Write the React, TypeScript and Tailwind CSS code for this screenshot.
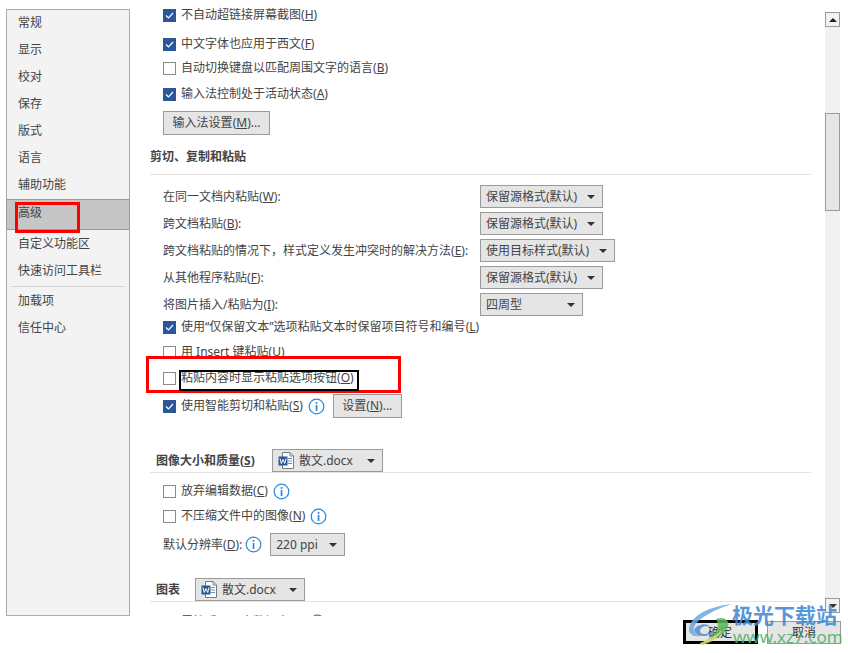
import React from "react";

const FONT = "font-['Noto_Sans','Noto_Sans_CJK_SC',sans-serif]";

// label with an underlined access key, e.g. "(H)"
const Label: React.FC<{ text: string; k?: string; after?: string }> = ({ text, k, after }) => (
  <span className="whitespace-nowrap">
    {text}
    {k && (
      <>
        (<span className="underline">{k}</span>)
      </>
    )}
    {after}
  </span>
);

const Check: React.FC<{ on?: boolean }> = ({ on }) =>
  on ? (
    <span className="w-[13px] h-[13px] bg-[#2b579a] border border-[#2b579a] flex items-center justify-center shrink-0">
      <svg width="11" height="11" viewBox="0 0 11 11">
        <path d="M2 5.5 L4.5 8 L9 3" fill="none" stroke="#fff" strokeWidth="1.2" />
      </svg>
    </span>
  ) : (
    <span className="w-[13px] h-[13px] bg-white border border-[#8a8a8a] shrink-0" />
  );

const Info: React.FC = () => (
  <svg width="17" height="17" viewBox="0 0 17 17" className="shrink-0">
    <circle cx="8.5" cy="8.5" r="7.3" fill="#fff" stroke="#2b88d8" strokeWidth="1.2" />
    <rect x="7.7" y="4" width="1.7" height="1.8" fill="#2b88d8" />
    <rect x="7.7" y="7" width="1.7" height="6" fill="#2b88d8" />
  </svg>
);

const WordIcon: React.FC = () => (
  <svg width="17" height="17" viewBox="0 0 17 17" className="shrink-0">
    <path d="M4.5 0.5 H12 L15.5 4 V16.5 H4.5 Z" fill="#fff" stroke="#7a7a7a" />
    <path d="M12 0.5 V4 H15.5" fill="none" stroke="#7a7a7a" />
    <path d="M10 6.5 H14 M10 9 H14 M10 11.5 H14" stroke="#5a8fd0" />
    <rect x="0.5" y="4.5" width="9" height="9" fill="#2b579a" />
    <path d="M2 6.5 L3.3 11.5 L5 7.5 L6.7 11.5 L8 6.5" fill="none" stroke="#fff" strokeWidth="1" />
  </svg>
);

const Caret: React.FC = () => (
  <span className="w-0 h-0 border-l-[4px] border-r-[4px] border-t-[4px] border-l-transparent border-r-transparent border-t-[#333] shrink-0" />
);

const Select: React.FC<{ text: string; w: string; doc?: boolean }> = ({ text, w, doc }) => (
  <div className={`${w} h-[23px] shrink-0 bg-[#e5e5e5] border border-[#9a9a9a] flex items-center pl-[5px] pr-[7px] justify-between`}>
    <span className="flex items-center gap-[4px] whitespace-nowrap">
      {doc && <WordIcon />}
      {text}
    </span>
    <Caret />
  </div>
);

const Btn: React.FC<{ children: React.ReactNode; w: string }> = ({ children, w }) => (
  <div className={`${w} h-[24px] shrink-0 bg-[#e5e5e5] border border-[#9a9a9a] flex items-center justify-center whitespace-nowrap`}>
    {children}
  </div>
);

const CheckRow: React.FC<{ on?: boolean; className: string; children: React.ReactNode }> = ({ on, className, children }) => (
  <div className={`${className} h-[20px] pl-[13px] flex items-center gap-[5px]`}>
    <Check on={on} />
    {children}
  </div>
);

const PasteRow: React.FC<{ children: React.ReactNode; select: React.ReactNode }> = ({ children, select }) => (
  <div className="h-[27px] pl-[13px] flex items-center">
    <div className="w-[317px]">{children}</div>
    {select}
  </div>
);

const NAV_TOP = ["常规", "显示", "校对", "保存", "版式", "语言", "辅助功能"];

export default function App() {
  return (
    <div className={`${FONT} relative w-[848px] h-[653px] bg-white overflow-hidden text-[12px] leading-[16px] text-[#444]`}>
      <div className="flex h-[616px]">
        {/* left nav */}
        <div className="ml-[6px] mt-[9px] w-[124px] h-[607px] bg-[#f3f3f3] border border-[#ababab] flex flex-col">
          <div className="-mt-px" />
          {NAV_TOP.map((n) => (
            <div key={n} className="h-[27px] pl-[11px] flex items-center shrink-0">
              {n}
            </div>
          ))}
          <div className="mt-[1px] h-[31px] pl-[11px] pb-[3px] flex items-center bg-[#c6c6c6] border border-[#9a9a9a] -mx-px shrink-0">
            <span>高级</span>
          </div>
          <div className="h-[27px] pl-[11px] flex items-center shrink-0">自定义功能区</div>
          <div className="h-[28px] pl-[11px] flex items-center shrink-0">快速访问工具栏</div>
          <div className="mx-[4px] mt-[1px] border-t border-[#d6d6d6]" />
          <div className="h-[27px] pl-[11px] flex items-center shrink-0">加载项</div>
          <div className="h-[27px] pl-[11px] flex items-center shrink-0">信任中心</div>
        </div>

        {/* settings list */}
        <div className="w-[661px] ml-[20px] h-[616px] overflow-hidden">
          <CheckRow on className="mt-[5px]"><Label text="不自动超链接屏幕截图" k="H" /></CheckRow>
          <CheckRow on className="mt-[9px]"><Label text="中文字体也应用于西文" k="F" /></CheckRow>
          <CheckRow className="mt-[4px]"><Label text="自动切换键盘以匹配周围文字的语言" k="B" /></CheckRow>
          <CheckRow on className="mt-[6px]"><Label text="输入法控制处于活动状态" k="A" /></CheckRow>
          <div className="mt-[7px] pl-[13px]">
            <Btn w="w-[107px]"><Label text="输入法设置" k="M" after="..." /></Btn>
          </div>
          <div className="mt-[12px] h-[20px] flex items-center font-bold">剪切、复制和粘贴</div>
          <div className="mt-[7px] border-t border-[#e3e3e3]" />
          <div className="mt-[8px]">
            <PasteRow select={<Select text="保留源格式(默认)" w="w-[123px]" />}><Label text="在同一文档内粘贴" k="W" after=":" /></PasteRow>
            <PasteRow select={<Select text="保留源格式(默认)" w="w-[123px]" />}><Label text="跨文档粘贴" k="B" after=":" /></PasteRow>
            <PasteRow select={<Select text="使用目标样式(默认)" w="w-[135px]" />}><Label text="跨文档粘贴的情况下，样式定义发生冲突时的解决方法" k="E" after=":" /></PasteRow>
            <PasteRow select={<Select text="保留源格式(默认)" w="w-[123px]" />}><Label text="从其他程序粘贴" k="F" after=":" /></PasteRow>
            <PasteRow select={<Select text="四周型" w="w-[103px]" />}><Label text="将图片插入/粘贴为" k="I" after=":" /></PasteRow>
          </div>
          <CheckRow on className="-mt-px"><Label text="使用“仅保留文本”选项粘贴文本时保留项目符号和编号" k="L" /></CheckRow>
          <CheckRow className="mt-[5px]"><Label text="用 Insert 键粘贴" k="U" /></CheckRow>
          <CheckRow className="mt-[6px]"><Label text="粘贴内容时显示粘贴选项按钮" k="O" /></CheckRow>
          <div className="mt-[6px] h-[24px] pl-[13px] flex items-center">
            <Check on />
            <span className="ml-[5px]"><Label text="使用智能剪切和粘贴" k="S" /></span>
            <span className="ml-[5px]"><Info /></span>
            <span className="ml-[8px]"><Btn w="w-[69px]"><Label text="设置" k="N" after="..." /></Btn></span>
          </div>
          <div className="mt-[31px] pl-[6px] flex items-center h-[23px]">
            <span className="w-[116px] font-bold"><Label text="图像大小和质量" k="S" /></span>
            <Select text="散文.docx" w="w-[111px]" doc />
          </div>
          <div className="border-t border-[#e3e3e3]" />
          <CheckRow className="mt-[8px]"><Label text="放弃编辑数据" k="C" /><Info /></CheckRow>
          <CheckRow className="mt-[5px]"><Label text="不压缩文件中的图像" k="N" /><Info /></CheckRow>
          <div className="mt-[7px] h-[23px] pl-[13px] flex items-center">
            <Label text="默认分辨率" k="D" after=":" />
            <span className="ml-[3px] mr-[8px]"><Info /></span>
            <Select text="220 ppi" w="w-[75px]" />
          </div>
          <div className="mt-[22px] pl-[6px] flex items-center h-[23px]">
            <span className="w-[39px] font-bold">图表</span>
            <Select text="散文.docx" w="w-[110px]" doc />
          </div>
          <div className="border-t border-[#e3e3e3]" />
          <CheckRow on className="mt-[10px]"><Label text="属性采用图表数据点" k="P" /><Info /></CheckRow>
        </div>

        {/* scrollbar */}
        <div className="ml-[14px] mt-[12px] w-[15px] h-[601px] bg-[#f1f1f1] flex flex-col shrink-0">
          <div className="h-[15px] bg-[#f1f1f1] border border-[#9a9a9a] flex items-center justify-center shrink-0">
            <span className="w-0 h-0 border-l-[4px] border-r-[4px] border-b-[4px] border-l-transparent border-r-transparent border-b-[#222]" />
          </div>
          <div className="mt-[86px] h-[98px] bg-[#e5e5e5] border border-[#9a9a9a] shrink-0" />
          <div className="mt-auto h-[15px] bg-[#f1f1f1] border border-[#9a9a9a] flex items-center justify-center shrink-0">
            <Caret />
          </div>
        </div>
      </div>

      {/* dialog buttons */}
      <div className="mt-[5px] pr-[7px] flex justify-end gap-[10px]">
        <div className="w-[74px] h-[23px] bg-[#e5e5e5] border border-[#9a9a9a] flex items-center justify-center text-[#333]">确定</div>
        <div className="w-[74px] h-[23px] bg-[#e5e5e5] border border-[#9a9a9a] flex items-center justify-center text-[#333]">取消</div>
      </div>

      {/* annotations drawn over the screenshot */}
      <div className="absolute left-[15px] top-[202px] w-[65px] h-[31px] border-[3px] border-[#ff0000]" />
      <div className="absolute left-[146px] top-[356px] w-[255px] h-[37px] border-[3px] border-[#ff0000]" />
      <div className="absolute left-[179px] top-[370px] w-[180px] h-[21px] border-[2px] border-black" />
      <div className="absolute left-[683px] top-[620px] w-[75px] h-[24px] border-[3px] border-black" />

      {/* watermark */}
      <svg className="absolute left-[686px] top-[600px]" width="48" height="48" viewBox="0 0 48 48">
        <path d="M46 4 C26 6 6 14 3 28 C2 34 8 37 14 36 C8 34 6 30 9 25 C14 17 30 9 46 4 Z" fill="#6aa9e0" opacity="0.85" />
        <path d="M8 30 C10 24 22 22 24 27 C20 25 14 27 14 31 C14 35 22 35 28 30 C24 38 10 38 8 30 Z" fill="#4f8fd0" opacity="0.85" />
        <path d="M30 19 C38 16 44 20 42 27 C38 35 26 42 16 43 C26 38 36 30 30 19 Z" fill="#5cb85c" opacity="0.85" />
        <path d="M14 43 C22 40 30 36 36 30 C32 38 24 44 14 45 Z" fill="#e8dc6a" opacity="0.85" />
      </svg>
      <div className="absolute left-[732px] top-[601px] text-[21px] leading-[28px] font-bold text-[#3d86d4] opacity-85 whitespace-nowrap">极光下载站</div>
      <div className="absolute left-[733px] top-[626px] text-[17px] leading-[22px] text-[#45b26b] opacity-85 whitespace-nowrap">www.xz7.com</div>
    </div>
  );
}
